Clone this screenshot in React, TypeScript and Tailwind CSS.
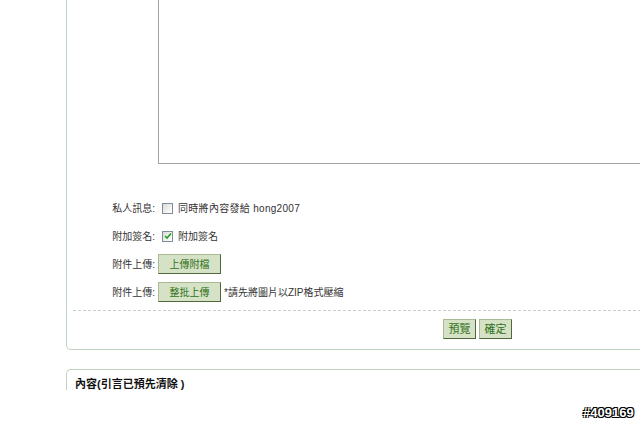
import React from "react";

const font = { fontFamily: '"Liberation Sans", "Noto Sans CJK TC", sans-serif' };

function Checkbox({ checked }: { checked?: boolean }) {
  return (
    <span className="ml-[4px] mr-[5px] flex h-[11px] w-[11px] items-center justify-center border border-[#7f8c99] bg-gradient-to-br from-[#dcdcd6] to-white">
      {checked && (
        <svg width="8" height="8" viewBox="0 0 8 8">
          <path d="M1 4 L3 6 L7 1.5" fill="none" stroke="#21a121" strokeWidth="1.6" />
        </svg>
      )}
    </span>
  );
}

function GreenButton({ children, className = "" }: { children: React.ReactNode; className?: string }) {
  return (
    <button
      className={
        "flex h-[20px] items-center justify-center border border-t-[#a9ba94] border-l-[#a9ba94] border-r-[#53673d] border-b-[#53673d] bg-[#d5e2c5] text-[10px] text-[#2f701a] " +
        className
      }
    >
      {children}
    </button>
  );
}

function Row({ label, children }: { label: string; children: React.ReactNode }) {
  return (
    <div className="flex h-[28px] items-center">
      <div className="w-[91px] pr-[3px] text-right text-[10px] text-[#333]">{label}</div>
      <div className="flex items-center text-[10px] text-[#333]">{children}</div>
    </div>
  );
}

export default function App() {
  return (
    <div className="relative h-[421px] w-[640px] overflow-hidden bg-white" style={font}>
      <div className="ml-[66px] mt-[-20px] w-[700px] rounded-bl-[5px] border-b border-l border-[#bfd5bf]">
        <div className="ml-[91px] h-[184px] border border-[#a3a3a3]" />

        <div className="mt-[30px]">
          <Row label="私人訊息:">
            <Checkbox />
            <span className="tracking-[0.3px]">同時將內容發給 hong2007</span>
          </Row>
          <Row label="附加簽名:">
            <Checkbox checked />
            <span>附加簽名</span>
          </Row>
          <Row label="附件上傳:">
            <GreenButton className="w-[63px]">上傳附檔</GreenButton>
          </Row>
          <Row label="附件上傳:">
            <GreenButton className="w-[63px]">整批上傳</GreenButton>
            <span className="ml-[3px]">*請先將圖片以ZIP格式壓縮</span>
          </Row>
        </div>

        <div className="ml-[6px] mt-[4px] border-t border-dashed border-[#c9cfc9]" />

        <div className="flex gap-[3px] pb-[10px] pl-[376px] pt-[8px]">
          <GreenButton className="w-[33px] text-[11px]">預覽</GreenButton>
          <GreenButton className="w-[33px] text-[11px]">確定</GreenButton>
        </div>
      </div>

      <div className="ml-[66px] mt-[19px] h-[21px] overflow-hidden">
        <div className="h-[40px] w-[700px] rounded-tl-[5px] border-l border-t border-[#bfd5bf] pl-[8px] pt-[6px] text-[11px] font-bold text-[#111]">
          內容(引言已預先清除 )
        </div>
      </div>

      <div className="absolute left-[583px] top-[403px] text-[13px] font-bold text-white [text-shadow:1px_1px_0_#000,-1px_-1px_0_#000,1px_-1px_0_#000,-1px_1px_0_#000]">
        #409169
      </div>
    </div>
  );
}
